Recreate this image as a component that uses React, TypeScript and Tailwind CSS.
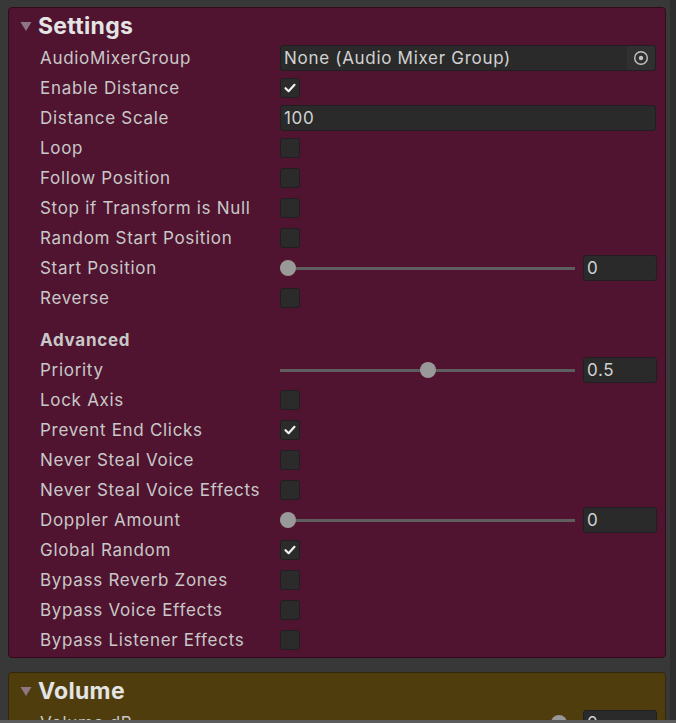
import React from "react";

type Row =
  | { kind: "object"; label: string; value: string }
  | { kind: "check"; label: string; on?: boolean }
  | { kind: "text"; label: string; value: string }
  | { kind: "slider"; label: string; value: string; pos: number }
  | { kind: "heading"; label: string }
  | { kind: "gap" };

const settings: Row[] = [
  { kind: "object", label: "AudioMixerGroup", value: "None (Audio Mixer Group)" },
  { kind: "check", label: "Enable Distance", on: true },
  { kind: "text", label: "Distance Scale", value: "100" },
  { kind: "check", label: "Loop" },
  { kind: "check", label: "Follow Position" },
  { kind: "check", label: "Stop if Transform is Null" },
  { kind: "check", label: "Random Start Position" },
  { kind: "slider", label: "Start Position", value: "0", pos: 0 },
  { kind: "check", label: "Reverse" },
  { kind: "gap" },
  { kind: "heading", label: "Advanced" },
  { kind: "slider", label: "Priority", value: "0.5", pos: 0.5 },
  { kind: "check", label: "Lock Axis" },
  { kind: "check", label: "Prevent End Clicks", on: true },
  { kind: "check", label: "Never Steal Voice" },
  { kind: "check", label: "Never Steal Voice Effects" },
  { kind: "slider", label: "Doppler Amount", value: "0", pos: 0 },
  { kind: "check", label: "Global Random", on: true },
  { kind: "check", label: "Bypass Reverb Zones" },
  { kind: "check", label: "Bypass Voice Effects" },
  { kind: "check", label: "Bypass Listener Effects" },
];

function Check({ on }: { on?: boolean }) {
  return (
    <div className="w-5 h-5 rounded-[3px] bg-[#2b2b2b] border border-[#1f1f1f] flex items-center justify-center">
      {on && (
        <svg width="14" height="14" viewBox="0 0 14 14">
          <path d="M2.5 7.2 L5.6 10.2 L11.5 3.8" fill="none" stroke="#f0f0f0" strokeWidth="2.2" strokeLinecap="round" strokeLinejoin="round" />
        </svg>
      )}
    </div>
  );
}

function Field({ value, className }: { value: string; className?: string }) {
  return (
    <div className={"h-[26px] rounded-[3px] bg-[#2a2a2a] border border-[#1f1f1f] flex items-center pl-[3px] pt-[1px] text-[#d2d2d2] " + (className ?? "")}>
      {value}
    </div>
  );
}

function Slider({ value, pos }: { value: string; pos: number }) {
  return (
    <div className="flex items-center gap-2">
      <div className="relative w-[295px] h-[26px] flex items-center">
        <div className="w-full h-[3px] bg-[#5e5e5e]" />
        <div
          className="absolute top-[5px] w-4 h-4 rounded-full bg-[#999999]"
          style={{ left: `${pos * 279}px` }}
        />
      </div>
      <Field value={value} className="w-[74px]" />
    </div>
  );
}

function Control({ row }: { row: Row }) {
  switch (row.kind) {
    case "object":
      return (
        <div className="h-[26px] w-[376px] rounded-[3px] bg-[#2a2a2a] border border-[#1f1f1f] flex items-center text-[#d2d2d2]">
          <span className="flex-1 pl-[3px] pt-[1px]">{row.value}</span>
          <div className="w-[28px] h-full bg-[#303030] rounded-r-[3px] flex items-center justify-center">
            <svg width="16" height="16" viewBox="0 0 16 16">
              <circle cx="8" cy="8" r="6.3" fill="none" stroke="#c2c2c2" strokeWidth="1.4" />
              <circle cx="8" cy="8" r="2.2" fill="#c2c2c2" />
            </svg>
          </div>
        </div>
      );
    case "check":
      return <Check on={row.on} />;
    case "text":
      return <Field value={row.value} className="w-[376px]" />;
    case "slider":
      return <Slider value={row.value} pos={row.pos} />;
    default:
      return null;
  }
}

function Header({ title }: { title: string }) {
  return (
    <div className="h-[35px] flex items-center pl-[11px] pt-[1px]">
      <svg width="12" height="12" viewBox="0 0 12 12" className="mr-[6px]">
        <path d="M0.5 2 L11.5 2 L6 11 Z" fill="#8f7683" />
      </svg>
      <span className="text-[23px] font-bold text-[#e4e4e4] tracking-[0.3px]">{title}</span>
    </div>
  );
}

export default function App() {
  return (
    <div
      className="w-[676px] h-[723px] bg-[#383838] overflow-hidden relative text-[17px] text-[#c8c8c8]"
      style={{ fontFamily: "Inter, 'Noto Sans', sans-serif", letterSpacing: "0.7px" }}
    >
      <div className="flex h-full">
        <div className="w-[670px] pt-[7px] pl-[8px] pr-[4px] flex flex-col gap-[14px]">
          <div className="rounded-[4px] border border-[#320a1b] bg-[#501430] pb-[2px]">
            <Header title="Settings" />
            {settings.map((r, i) =>
              r.kind === "gap" ? (
                <div key={i} className="h-[12px]" />
              ) : (
                <div key={i} className="h-[30px] flex items-center pl-[31px]">
                  <span className={"w-[240px] pt-[2px] " + (r.kind === "heading" ? "font-bold" : "")}>{r.label}</span>
                  <Control row={r} />
                </div>
              )
            )}
          </div>
          <div className="rounded-[4px] border border-[#33280a] bg-[#4f3d0e] h-[80px]">
            <Header title="Volume" />
            <div className="h-[30px] flex items-center pl-[31px]">
              <span className="w-[240px] pt-[2px]">Volume dB</span>
              <Slider value="0" pos={0.97} />
            </div>
          </div>
        </div>
        <div className="w-[6px] h-full bg-[#2e2e2e]" />
      </div>
      <div className="absolute left-0 right-0 bottom-0 h-[3px] bg-[#5c5c5c]" />
    </div>
  );
}
